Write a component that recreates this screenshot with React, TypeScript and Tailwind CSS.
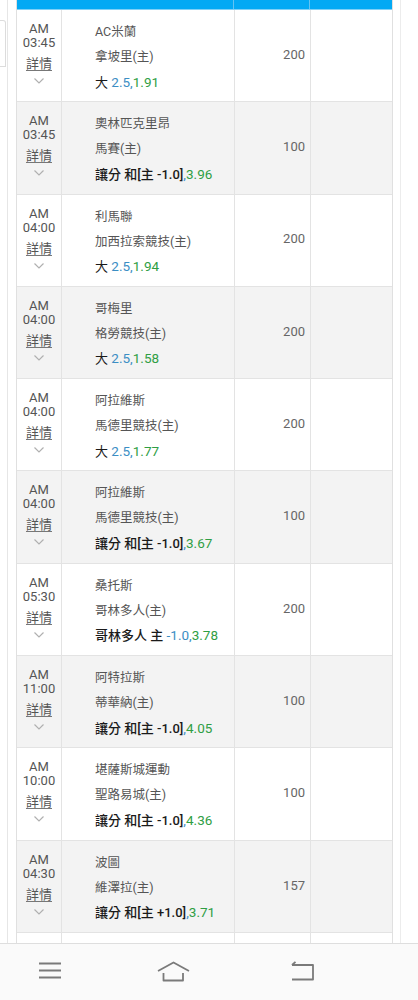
import React from 'react';

type Bet = {
  time: string;
  away: string;
  home: string;
  pick: string;
  line: string;
  odds: string;
  amount: string;
};

const bets: Bet[] = [
  { time: '03:45', away: 'AC米蘭', home: '拿坡里(主)', pick: '大', line: ' 2.5,', odds: '1.91', amount: '200' },
  { time: '03:45', away: '奧林匹克里昂', home: '馬賽(主)', pick: '讓分 和[主 -1.0]', line: ',', odds: '3.96', amount: '100' },
  { time: '04:00', away: '利馬聯', home: '加西拉索競技(主)', pick: '大', line: ' 2.5,', odds: '1.94', amount: '200' },
  { time: '04:00', away: '哥梅里', home: '格勞競技(主)', pick: '大', line: ' 2.5,', odds: '1.58', amount: '200' },
  { time: '04:00', away: '阿拉維斯', home: '馬德里競技(主)', pick: '大', line: ' 2.5,', odds: '1.77', amount: '200' },
  { time: '04:00', away: '阿拉維斯', home: '馬德里競技(主)', pick: '讓分 和[主 -1.0]', line: ',', odds: '3.67', amount: '100' },
  { time: '05:30', away: '桑托斯', home: '哥林多人(主)', pick: '哥林多人 主', line: ' -1.0,', odds: '3.78', amount: '200' },
  { time: '11:00', away: '阿特拉斯', home: '蒂華納(主)', pick: '讓分 和[主 -1.0]', line: ',', odds: '4.05', amount: '100' },
  { time: '10:00', away: '堪薩斯城運動', home: '聖路易城(主)', pick: '讓分 和[主 -1.0]', line: ',', odds: '4.36', amount: '100' },
  { time: '04:30', away: '波圖', home: '維澤拉(主)', pick: '讓分 和[主 +1.0]', line: ',', odds: '3.71', amount: '157' },
];

const font = { fontFamily: "Roboto, 'Noto Sans CJK TC', sans-serif" };

const Chevron = () => (
  <svg width="12" height="8" viewBox="0 0 12 8" fill="none" stroke="#b0b0b0" strokeWidth="1.2">
    <path d="M1.5 1.5 L6 6 L10.5 1.5" />
  </svg>
);

const BetRow = ({ bet, shaded }: { bet: Bet; shaded: boolean }) => (
  <div className={`flex h-[92.3px] shrink-0 border-b border-[#e3e3e3] ${shaded ? 'bg-[#f3f3f3]' : 'bg-white'}`}>
    {/* time */}
    <div className="w-[45px] shrink-0 border-r border-[#e3e3e3] flex flex-col items-center pt-[12px] text-[13px] leading-[14px] text-[#555]">
      <span>AM</span>
      <span>{bet.time}</span>
      <span className="mt-[7px] underline underline-offset-2 decoration-[#777]">詳情</span>
      <span className="mt-[6px]"><Chevron /></span>
    </div>
    {/* match */}
    <div className="w-[173px] shrink-0 border-r border-[#e3e3e3] pl-[33px] pt-[13px] flex flex-col text-[12.5px] text-[#555]">
      <span className="leading-[18px]">{bet.away}</span>
      <span className="leading-[18px] mt-[7px]">{bet.home}</span>
      <span className={`leading-[18px] mt-[6.5px] text-[13px] text-[#1a1a1a] ${bet.pick === '大' ? 'font-normal text-[13.5px]' : 'font-medium'}`}>
        {bet.pick}
        <span className="text-[#3b8ec4] font-normal text-[13.5px]">{bet.line}</span>
        <span className="text-[#2f9e44] font-normal text-[13.5px]">{bet.odds}</span>
      </span>
    </div>
    {/* amount */}
    <div className="w-[76px] shrink-0 border-r border-[#e3e3e3] flex items-center justify-end pr-[5px] pb-[2px] text-[13px] text-[#666]">
      {bet.amount}
    </div>
    <div className="flex-1" />
  </div>
);

export default function App() {
  return (
    <div className="w-[418px] h-[1000px] overflow-hidden bg-white flex flex-col" style={font}>
      <div className="flex h-[943px] overflow-hidden">
        {/* left edge panel */}
        <div className="w-[16px] shrink-0 flex">
          <div className="w-[8px] h-full border-r border-[#e6e6e6] pt-[20px]">
            <div className="w-[6px] h-[47px] border-r border-b border-t border-[#dcdcdc] rounded-tr-[3px]" />
          </div>
        </div>

        {/* table */}
        <div className="w-[377px] shrink-0 border-l border-r border-[#e0e0e0] flex flex-col">
          <div className="flex h-[10px] shrink-0 bg-[#03a9f4] border-b border-[#7fd0f7]">
            <div className="w-[217px] shrink-0 border-r border-[#64c3f2]" />
            <div className="w-[76px] shrink-0 border-r border-[#64c3f2]" />
            <div className="flex-1" />
          </div>
          {bets.map((b, i) => (
            <BetRow key={i} bet={b} shaded={i % 2 === 1} />
          ))}
          <div className="flex h-[92px] shrink-0 bg-white">
            <div className="w-[45px] shrink-0 border-r border-[#e3e3e3]" />
            <div className="w-[173px] shrink-0 border-r border-[#e3e3e3]" />
            <div className="w-[76px] shrink-0 border-r border-[#e3e3e3]" />
          </div>
        </div>

        {/* right edge */}
        <div className="flex-1 flex">
          <div className="w-[8px] h-full border-r border-[#ececec]" />
        </div>
      </div>

      {/* android nav bar */}
      <div className="h-[57px] shrink-0 bg-[#fafafa] border-t border-[#dedede] flex items-start pt-[18px]">
        <div className="ml-[39px]">
          <svg width="23" height="17" viewBox="0 0 23 17" fill="none" stroke="#7a7a7a" strokeWidth="1.8">
            <path d="M0 1.5 H22 M0 8.5 H22 M0 15.5 H22" />
          </svg>
        </div>
        <div className="ml-[95px] -mt-[1px]">
          <svg width="33" height="21" viewBox="0 0 33 21" fill="none" stroke="#7a7a7a" strokeWidth="1.8" strokeLinejoin="round">
            <path d="M1 10 L16.5 1.5 L32 10" />
            <path d="M6.5 12 V19.5 H26 V12" />
          </svg>
        </div>
        <div className="ml-[100px] -mt-[1px]">
          <svg width="25" height="20" viewBox="0 0 25 20" fill="none" stroke="#7a7a7a" strokeWidth="1.8" strokeLinejoin="round">
            <path d="M2 4 H23 V18.5 H2" />
            <path d="M5.5 0.8 L2 4" />
          </svg>
        </div>
      </div>
    </div>
  );
}
